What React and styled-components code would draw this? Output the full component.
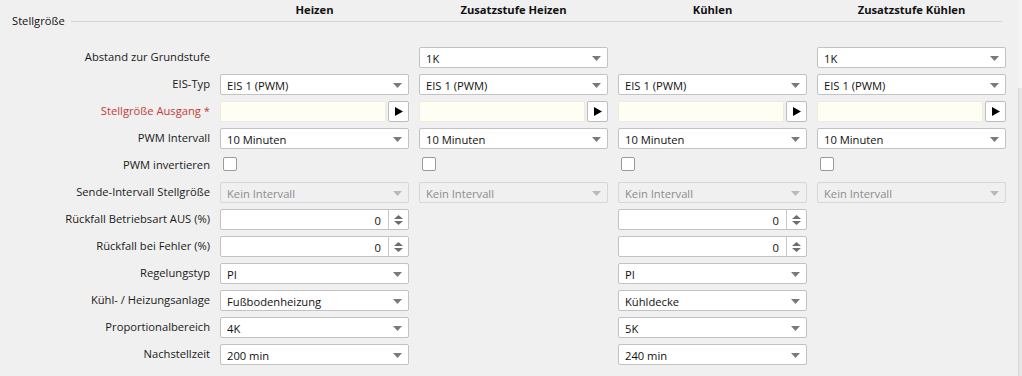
import React from "react";
import styled, { createGlobalStyle } from "styled-components";

const GlobalStyle = createGlobalStyle`
  html, body {
    margin: 0;
    padding: 0;
    background: #f0f0f0;
    font-family: "Open Sans", "Noto Sans", sans-serif;
    font-size: 11.2px;
    color: #1a1a1a;
  }
`;

const Page = styled.div`
  display: flex;
  height: 376px;
  overflow: hidden;
  background: #f0f0f0;
`;

const Content = styled.div`
  flex: 1;
  min-width: 0;
`;

const ScrollTrack = styled.div`
  width: 4px;
  display: flex;
  flex-direction: column;
  padding-top: 88px;
  background: #f3f3f3;
`;

const ScrollThumb = styled.div`
  flex: 1;
  background: #e6e6e6;
  border-left: 1px solid #d7d7d7;
`;

const Columns = `
  display: grid;
  grid-template-columns: 210px repeat(4, 189px);
  column-gap: 10px;
`;

const HeaderRow = styled.div`
  ${Columns}
  padding-top: 5px;
  height: 10px;
  line-height: 10px;
`;

const ColumnTitle = styled.div`
  font-weight: 700;
  text-align: center;
  color: #111;
  white-space: nowrap;
`;

const GroupHeader = styled.div`
  display: flex;
  align-items: center;
  gap: 6px;
  height: 12px;
  padding: 0 16px 0 12px;
`;

const GroupTitle = styled.span`
  line-height: 12px;
  white-space: nowrap;
  color: #111;
`;

const GroupRule = styled.div`
  flex: 1;
  height: 1px;
  background: #d4d4d4;
`;

const FormGrid = styled.div`
  ${Columns}
  grid-auto-rows: 21px;
  row-gap: 6px;
  padding-top: 20px;
`;

const FieldLabel = styled.div`
  align-self: center;
  text-align: right;
  white-space: nowrap;
  padding-bottom: 3px;
  color: ${(p) => (p.$required ? "#c33b36" : "#1a1a1a")};
`;

const Empty = styled.div``;

const SelectBox = styled.div`
  display: flex;
  align-items: center;
  box-sizing: border-box;
  height: 21px;
  padding: 2px 6px 0 6px;
  border: 1px solid ${(p) => (p.$disabled ? "#d6d6d6" : "#c2c2c2")};
  border-radius: 2px;
  background: ${(p) => (p.$disabled ? "#f0f0f0" : "#ffffff")};
  color: ${(p) => (p.$disabled ? "#8c8c8c" : "#111")};
`;

const SelectText = styled.span`
  flex: 1;
  white-space: nowrap;
  overflow: hidden;
`;

const PickerRow = styled.div`
  display: flex;
  gap: 2px;
  height: 21px;
`;

const PickerInput = styled.div`
  flex: 1;
  box-sizing: border-box;
  border: 1px solid #f1ecd9;
  background: #fffef5;
`;

const PickerButton = styled.div`
  width: 21px;
  box-sizing: border-box;
  display: flex;
  align-items: center;
  justify-content: center;
  border: 1px solid #bdbdbd;
  border-radius: 2px;
  background: #ffffff;
`;

const CheckCell = styled.div`
  padding: 2px 0 0 3px;
`;

const CheckBox = styled.div`
  width: 14px;
  height: 14px;
  box-sizing: border-box;
  border: 1px solid #9a9a9a;
  border-radius: 2px;
  background: #ffffff;
`;

const SpinBox = styled.div`
  display: flex;
  box-sizing: border-box;
  height: 21px;
  border: 1px solid #c2c2c2;
  border-radius: 2px;
  background: #ffffff;
`;

const SpinValue = styled.div`
  flex: 1;
  display: flex;
  align-items: center;
  justify-content: flex-end;
  padding: 2px 7px 0 0;
  color: #111;
`;

const SpinButtons = styled.div`
  width: 19px;
  border-left: 1px solid #c8c8c8;
  display: flex;
  flex-direction: column;
  align-items: center;
  justify-content: center;
  gap: 2px;
`;

const Arrow = ({ color = "#7a7a7a" }) => (
  <svg width="9" height="5" viewBox="0 0 9 5">
    <polygon points="0,0 9,0 4.5,5" fill={color} />
  </svg>
);

const Select = ({ value, disabled }) => (
  <SelectBox $disabled={disabled}>
    <SelectText>{value}</SelectText>
    <Arrow color={disabled ? "#b9b9b9" : "#7a7a7a"} />
  </SelectBox>
);

const Picker = () => (
  <PickerRow>
    <PickerInput />
    <PickerButton>
      <svg width="8" height="9" viewBox="0 0 8 9">
        <polygon points="0,0 8,4.5 0,9" fill="#000" />
      </svg>
    </PickerButton>
  </PickerRow>
);

const Spinner = ({ value }) => (
  <SpinBox>
    <SpinValue>{value}</SpinValue>
    <SpinButtons>
      <svg width="9" height="4" viewBox="0 0 9 4">
        <polygon points="0,4 9,4 4.5,0" fill="#6e6e6e" />
      </svg>
      <svg width="9" height="4" viewBox="0 0 9 4">
        <polygon points="0,0 9,0 4.5,4" fill="#6e6e6e" />
      </svg>
    </SpinButtons>
  </SpinBox>
);

const Check = () => (
  <CheckCell>
    <CheckBox />
  </CheckCell>
);

const sel = (v, disabled) => ({ type: "select", value: v, disabled });
const all = (c) => [c, c, c, c];

const rows = [
  { label: "Abstand zur Grundstufe", cells: [null, sel("1K"), null, sel("1K")] },
  { label: "EIS-Typ", cells: all(sel("EIS 1 (PWM)")) },
  { label: "Stellgröße Ausgang *", required: true, cells: all({ type: "picker" }) },
  { label: "PWM Intervall", cells: all(sel("10 Minuten")) },
  { label: "PWM invertieren", cells: all({ type: "check" }) },
  { label: "Sende-Intervall Stellgröße", cells: all(sel("Kein Intervall", true)) },
  { label: "Rückfall Betriebsart AUS (%)", cells: [{ type: "spin", value: "0" }, null, { type: "spin", value: "0" }, null] },
  { label: "Rückfall bei Fehler (%)", cells: [{ type: "spin", value: "0" }, null, { type: "spin", value: "0" }, null] },
  { label: "Regelungstyp", cells: [sel("PI"), null, sel("PI"), null] },
  { label: "Kühl- / Heizungsanlage", cells: [sel("Fußbodenheizung"), null, sel("Kühldecke"), null] },
  { label: "Proportionalbereich", cells: [sel("4K"), null, sel("5K"), null] },
  { label: "Nachstellzeit", cells: [sel("200 min"), null, sel("240 min"), null] },
];

const renderCell = (c, key) => {
  if (!c) return <Empty key={key} />;
  if (c.type === "select") return <Select key={key} value={c.value} disabled={c.disabled} />;
  if (c.type === "picker") return <Picker key={key} />;
  if (c.type === "check") return <Check key={key} />;
  if (c.type === "spin") return <Spinner key={key} value={c.value} />;
  return <Empty key={key} />;
};

const titles = ["Heizen", "Zusatzstufe Heizen", "Kühlen", "Zusatzstufe Kühlen"];

export default function App() {
  return (
    <>
      <GlobalStyle />
      <Page>
        <Content>
          <HeaderRow>
            <Empty />
            {titles.map((t) => (
              <ColumnTitle key={t}>{t}</ColumnTitle>
            ))}
          </HeaderRow>
          <GroupHeader>
            <GroupTitle>Stellgröße</GroupTitle>
            <GroupRule />
          </GroupHeader>
          <FormGrid>
            {rows.map((r) => (
              <React.Fragment key={r.label}>
                <FieldLabel $required={r.required}>{r.label}</FieldLabel>
                {r.cells.map((c, i) => renderCell(c, r.label + i))}
              </React.Fragment>
            ))}
          </FormGrid>
        </Content>
        <ScrollTrack>
          <ScrollThumb />
        </ScrollTrack>
      </Page>
    </>
  );
}
